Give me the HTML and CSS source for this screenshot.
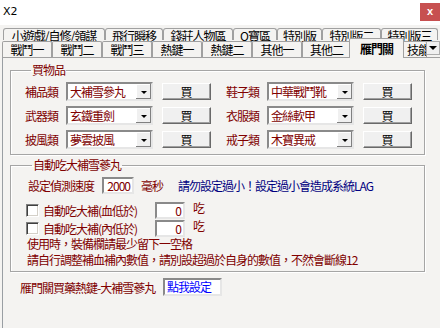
FILE: index.html
```html
<!DOCTYPE html>
<html lang="zh-Hant">
<head>
    <meta charset="UTF-8">
    <meta name="viewport" content="width=device-width, initial-scale=1.0">
    <title>X2</title>
    <link rel="stylesheet" href="styles.css">
</head>
<body>

    <div class="titlebar">
        <span class="title">X2</span>
        <span class="close">x</span>
    </div>

    <div class="tabs">
        <div class="tab-row back">
            <div class="tab">小遊戲/自修/領謀</div>
            <div class="tab">飛行瞬移</div>
            <div class="tab">錢莊人物區</div>
            <div class="tab">O寶區</div>
            <div class="tab">特別版</div>
            <div class="tab">特別版二</div>
            <div class="tab">特別版三</div>
        </div>
        <div class="tab-row front">
            <div class="tab">戰鬥一</div>
            <div class="tab">戰鬥二</div>
            <div class="tab">戰鬥三</div>
            <div class="tab">熱鍵一</div>
            <div class="tab">熱鍵二</div>
            <div class="tab">其他一</div>
            <div class="tab narrow">其他二</div>
            <div class="tab active">雁門關</div>
            <div class="tab last">技能</div>
        </div>
        <div class="tab-scroll"><span class="arrow"></span></div>
    </div>

    <div class="panel">
        <fieldset class="group buy">
            <legend>買物品</legend>
            <div class="buy-grid">
                <div class="buy-item">
                    <span class="label">補品類</span>
                    <div class="combo"><span class="combo-text">大補雪參丸</span><span class="combo-btn"><span class="arrow"></span></span></div>
                    <button class="btn">買</button>
                </div>
                <div class="buy-item">
                    <span class="label">鞋子類</span>
                    <div class="combo"><span class="combo-text">中華戰鬥靴</span><span class="combo-btn"><span class="arrow"></span></span></div>
                    <button class="btn">買</button>
                </div>
                <div class="buy-item">
                    <span class="label">武器類</span>
                    <div class="combo"><span class="combo-text">玄鐵重劍</span><span class="combo-btn"><span class="arrow"></span></span></div>
                    <button class="btn">買</button>
                </div>
                <div class="buy-item">
                    <span class="label">衣服類</span>
                    <div class="combo"><span class="combo-text">金絲軟甲</span><span class="combo-btn"><span class="arrow"></span></span></div>
                    <button class="btn">買</button>
                </div>
                <div class="buy-item">
                    <span class="label">披風類</span>
                    <div class="combo"><span class="combo-text">夢雲披風</span><span class="combo-btn"><span class="arrow"></span></span></div>
                    <button class="btn">買</button>
                </div>
                <div class="buy-item">
                    <span class="label">戒子類</span>
                    <div class="combo"><span class="combo-text">木寶異戒</span><span class="combo-btn"><span class="arrow"></span></span></div>
                    <button class="btn">買</button>
                </div>
            </div>
        </fieldset>

        <fieldset class="group auto">
            <legend>自動吃大補雪蔘丸</legend>
            <div class="speed-row">
                <span class="speed-label">設定偵測速度</span>
                <span class="num speed">2000</span>
                <span class="unit">毫秒</span>
                <span class="warn">請勿設定過小！設定過小會造成系統LAG</span>
            </div>
            <div class="check-row first">
                <span class="checkbox"></span>
                <span class="check-label">自動吃大補(血低於)</span>
                <span class="num">0</span>
                <span class="eat">吃</span>
            </div>
            <div class="check-row">
                <span class="checkbox"></span>
                <span class="check-label">自動吃大補(內低於)</span>
                <span class="num">0</span>
                <span class="eat">吃</span>
            </div>
            <div class="notes">
                <div>使用時，裝備欄請最少留下一空格</div>
                <div>請自行調整補血補內數值，請別設超過於自身的數值，不然會斷線12</div>
            </div>
        </fieldset>

        <div class="hotkey-row">
            <span class="hotkey-label">雁門關買藥熱鍵-大補雪蔘丸</span>
            <span class="hotkey">點我設定</span>
        </div>
    </div>

</body>
</html>
```

FILE: styles.css
```css
* {
    box-sizing: border-box;
}
body {
    margin: 0;
    width: 440px;
    height: 328px;
    overflow: hidden;
    background: #f4f3f1;
    font-family: "Noto Sans CJK TC", "Liberation Sans", sans-serif;
    font-size: 12px;
    letter-spacing: -1px;
    color: #000;
}

/* title bar */
.titlebar {
    height: 25px;
    background: #fff;
    display: flex;
    justify-content: space-between;
    align-items: flex-start;
}
.title {
    font-family: "DejaVu Sans", sans-serif;
    font-size: 11px;
    letter-spacing: 0;
    line-height: 14px;
    padding: 5px 0 0 3px;
}
.close {
    width: 20px;
    height: 18px;
    margin-top: 3px;
    background: #c75050;
    color: #fff;
    font-family: "Liberation Sans", sans-serif;
    font-weight: bold;
    font-size: 11px;
    letter-spacing: 0;
    line-height: 17px;
    text-align: center;
}

/* tabs */
.tabs {
    position: relative;
    height: 32px;
}
.tab-row {
    display: flex;
}
.tab {
    border: 1px solid #a0a0a0;
    border-bottom: none;
    text-align: center;
    white-space: nowrap;
    overflow: hidden;
    background: #f4f3f1;
}
.back {
    padding: 3px 0 0 3px;
    height: 19px;
}
.back .tab {
    height: 12px;
    line-height: 11px;
    padding-top: 1px;
    overflow: visible;
    border-radius: 3px 3px 0 0;
}
.back .tab:nth-child(1) { width: 102px; }
.back .tab:nth-child(2) { width: 58px; }
.back .tab:nth-child(3) { width: 70px; }
.back .tab:nth-child(4) { width: 44px; }
.back .tab:nth-child(5) { width: 45px; }
.back .tab:nth-child(6) { width: 59px; }
.back .tab:nth-child(7) { width: 57px; }

.front {
    position: relative;
    z-index: 1;
    margin-top: -4px;
    height: 17px;
    padding-left: 2px;
    align-items: flex-end;
}
.front .tab {
    width: 50px;
    height: 16px;
    line-height: 15px;
    border-radius: 2px 2px 0 0;
}
.front .tab.narrow {
    width: 49px;
}
.front .tab.active {
    position: relative;
    z-index: 1;
    width: 55px;
    height: 20px;
    margin: 0 -2px -1px -2px;
    line-height: 19px;
    font-weight: bold;
}
.front .tab.last {
    width: 25px;
    text-align: left;
    padding-left: 4px;
}
.tab-scroll {
    position: absolute;
    right: 0;
    top: 16px;
    z-index: 2;
    width: 14px;
    height: 14px;
    background: #f0f0f0;
    border: 1px solid #adadad;
    display: flex;
    align-items: center;
    justify-content: center;
}
.arrow {
    width: 0;
    height: 0;
    border-left: 3px solid transparent;
    border-right: 3px solid transparent;
    border-top: 3px solid #000;
}
.tab-scroll .arrow {
    border-left-width: 4px;
    border-right-width: 4px;
    border-top-width: 4px;
}

/* content panel */
.panel {
    margin-left: 2px;
    height: 271px;
    padding-top: 5px;
    border-top: 1px solid #a0a0a0;
    border-left: 1px solid #999ea3;
}
.group {
    margin: 0 0 0 7px;
    width: 415px;
    min-width: 0;
    border: 1px solid #a5a5a5;
    box-shadow: 1px 1px 0 #fff, inset 1px 1px 0 #fff;
}
.group legend {
    margin-left: 6px;
    padding: 0 1px;
    line-height: 14px;
    color: #800000;
}
.buy {
    padding: 5px 0 5px 14px;
}
.buy-grid {
    display: grid;
    grid-template-columns: 186px 186px;
    column-gap: 15px;
    row-gap: 5px;
}
.buy-item {
    display: flex;
    align-items: center;
    height: 19px;
}
.label {
    width: 41px;
    color: #800000;
}
.combo {
    width: 87px;
    height: 19px;
    display: flex;
    background: #fff;
    border: 2px solid;
    border-color: #8a8a8a #e6e6e6 #e6e6e6 #8a8a8a;
}
.combo-text {
    flex: 1;
    padding-left: 2px;
    line-height: 15px;
    color: #800000;
    white-space: nowrap;
    overflow: hidden;
}
.combo-btn {
    width: 15px;
    background: #f0f0f0;
    box-shadow: inset -1px -1px 0 #808080, inset 1px 1px 0 #fff;
    display: flex;
    align-items: center;
    justify-content: center;
    padding-top: 2px;
}
.btn {
    margin-left: 9px;
    width: 49px;
    height: 17px;
    padding: 0;
    font-family: inherit;
    font-size: 12px;
    letter-spacing: 0;
    line-height: 14px;
    color: #000;
    background: #f0f0f0;
    border: 1px solid;
    border-color: #fff #696969 #696969 #fff;
    box-shadow: inset -1px -1px 0 #a0a0a0;
}

/* auto eat group */
.auto {
    margin-top: 3px;
    padding: 5px 0 3px 15px;
}
.speed-row {
    display: flex;
    align-items: center;
    height: 17px;
    margin-left: 2px;
    color: #800000;
}
.speed-label {
    width: 74px;
}
.num {
    width: 30px;
    height: 17px;
    background: #fff;
    border: 2px solid;
    border-color: #8a8a8a #e6e6e6 #e6e6e6 #8a8a8a;
    text-align: right;
    padding-right: 2px;
    line-height: 13px;
    color: #800000;
}
.num.speed {
    width: 32px;
}
.unit {
    width: 37px;
    margin-left: 7px;
}
.warn {
    color: #000080;
    white-space: nowrap;
}
.check-row {
    display: flex;
    align-items: center;
    height: 18px;
    color: #800000;
}
.check-row.first {
    margin-top: 7px;
}
.checkbox {
    width: 13px;
    height: 13px;
    background: #fff;
    border: 1px solid;
    border-color: #808080 #fff #fff #808080;
    box-shadow: inset 1px 1px 0 #404040, inset -1px -1px 0 #d4d0c8;
}
.check-label {
    width: 112px;
    margin-left: 4px;
}
.eat {
    align-self: flex-start;
    margin-left: 8px;
    line-height: 14px;
}
.notes {
    margin: -1px 0 0 1px;
    line-height: 16px;
    color: #800000;
    white-space: nowrap;
}

/* hotkey row */
.hotkey-row {
    display: flex;
    align-items: center;
    height: 18px;
    margin: 6px 0 0 17px;
}
.hotkey-label {
    width: 143px;
    color: #800000;
    white-space: nowrap;
}
.hotkey {
    width: 59px;
    height: 18px;
    padding-left: 2px;
    line-height: 14px;
    background: #fff;
    border: 2px solid;
    border-color: #8a8a8a #e6e6e6 #e6e6e6 #8a8a8a;
    color: #0000ff;
}
```
